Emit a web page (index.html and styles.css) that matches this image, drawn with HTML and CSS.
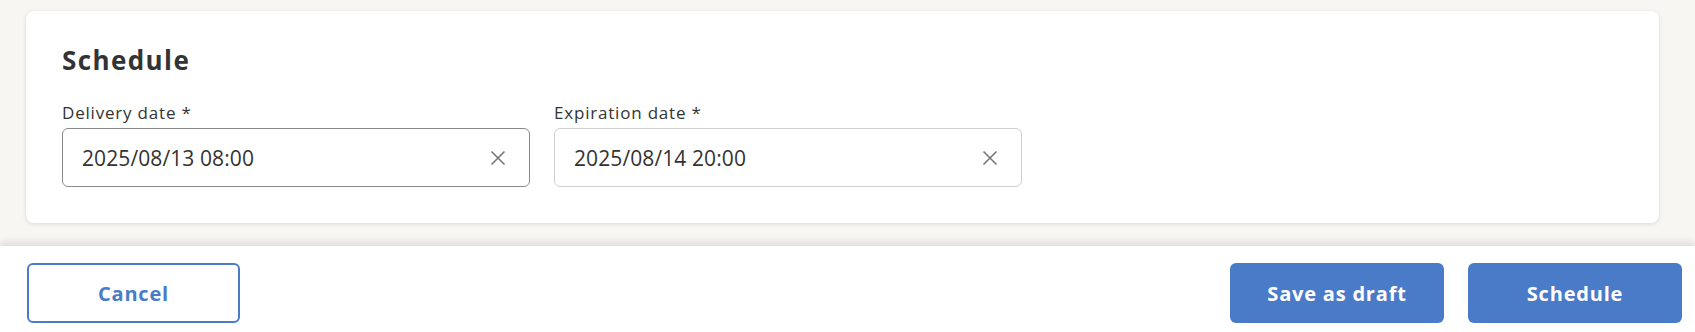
FILE: index.html
```html
<!DOCTYPE html>
<html>
<head>
    <title>Schedule</title>
    <link rel="stylesheet" href="styles.css">
</head>
<body>
    <div class="page">
        <div class="card">
            <h2>Schedule</h2>
            <div class="fields">
                <div class="field">
                    <label>Delivery date *</label>
                    <div class="input active">
                        <span>2025/08/13 08:00</span>
                        <svg class="clear" viewBox="0 0 16 16">
                            <path d="M1.5 1.5 14.5 14.5M14.5 1.5 1.5 14.5"/>
                        </svg>
                    </div>
                </div>
                <div class="field">
                    <label>Expiration date *</label>
                    <div class="input">
                        <span>2025/08/14 20:00</span>
                        <svg class="clear" viewBox="0 0 16 16">
                            <path d="M1.5 1.5 14.5 14.5M14.5 1.5 1.5 14.5"/>
                        </svg>
                    </div>
                </div>
            </div>
        </div>
    </div>

    <!-- Bottom action bar -->
    <div class="footer">
        <button class="btn btn-outline">Cancel</button>
        <div class="actions">
            <button class="btn btn-primary">Save as draft</button>
            <button class="btn btn-primary">Schedule</button>
        </div>
    </div>
</body>
</html>
```

FILE: styles.css
```css
body {
    margin: 0;
    font-family: 'Open Sans', 'Noto Sans', sans-serif;
    color: #333;
    background-color: #f7f6f3;
}
.page {
    height: 246px;
    box-sizing: border-box;
    padding: 11px 36px 0 26px;
}
.card {
    background: white;
    border-radius: 8px;
    height: 212px;
    box-sizing: border-box;
    padding: 32px 36px 0;
    box-shadow: 0 1px 4px rgba(0,0,0,0.12);
}
.card h2 {
    margin: 0;
    font-size: 26px;
    line-height: 34px;
    font-weight: 700;
    color: #333;
    letter-spacing: 1.4px;
}
.fields {
    display: flex;
    gap: 24px;
    margin-top: 24px;
}
.field {
    width: 468px;
}
.field label {
    display: block;
    font-size: 17px;
    line-height: 24px;
    font-weight: 500;
    color: #333;
    letter-spacing: 0.8px;
    margin-bottom: 3px;
}
.input {
    height: 59px;
    box-sizing: border-box;
    border: 1px solid #cfcfcf;
    border-radius: 6px;
    display: flex;
    align-items: center;
    justify-content: space-between;
    padding: 0 23px 0 19px;
    font-size: 21px;
    color: #333;
    letter-spacing: 0.1px;
}
.input.active {
    border-color: #8a8a8a;
}
.clear {
    width: 16px;
    height: 16px;
    stroke: #777;
    stroke-width: 1.6;
    fill: none;
}
.footer {
    position: relative;
    background: white;
    display: flex;
    justify-content: space-between;
    padding: 17px 13px 9px 27px;
    box-shadow: 0 -3px 8px rgba(0,0,0,0.12);
}
.actions {
    display: flex;
    gap: 24px;
}
.btn {
    font-family: 'Open Sans', 'Noto Sans', sans-serif;
    height: 60px;
    width: 214px;
    border-radius: 6px;
    font-size: 20px;
    font-weight: 700;
    cursor: pointer;
    letter-spacing: 0.8px;
}
.btn-outline {
    background: white;
    color: #4a7bc8;
    border: 2px solid #4a7bc8;
    width: 213px;
}
.btn-primary {
    background-color: #4a7bc8;
    color: white;
    border: none;
}
```
